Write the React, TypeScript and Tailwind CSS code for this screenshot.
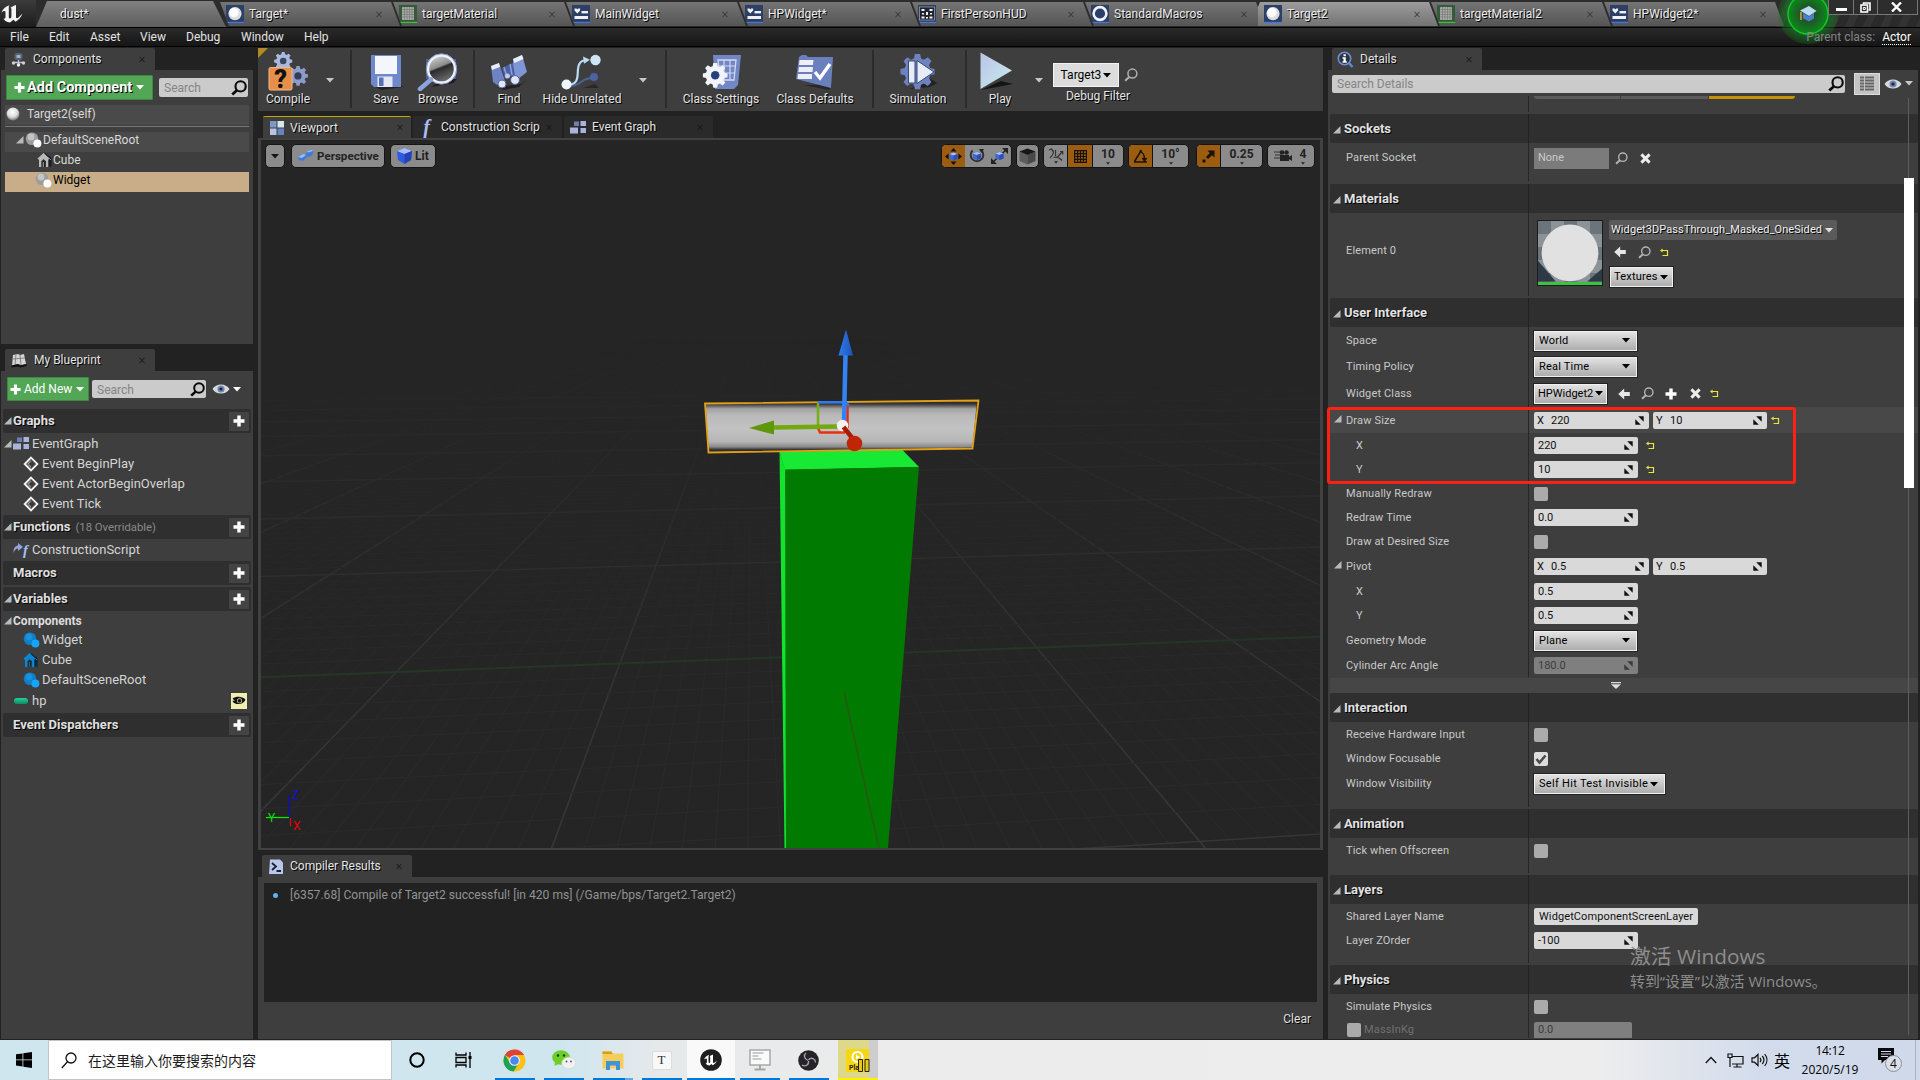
import type { ReactNode } from "react";

const SH = "[text-shadow:1px_1px_0_#000]";

/* ---------- small glyphs ---------- */

const Caret = ({ c = "text-[#c8c8c8]", w = 8 }: { c?: string; w?: number }) => (
  <svg width={w} height={w / 2 + 1} viewBox="0 0 8 5" className={`shrink-0 ${c}`}>
    <path d="M0 0h8L4 4.6z" fill="currentColor" />
  </svg>
);

const Tri = ({ className = "" }: { className?: string }) => (
  <svg width="8" height="8" viewBox="0 0 8 8" className={`shrink-0 ${className}`}>
    <path d="M7.5 0v7.5H0z" fill="#b9b9b9" />
  </svg>
);

const CloseX = ({ className = "" }: { className?: string }) => (
  <svg width="6" height="7" viewBox="0 0 6 7" className={`shrink-0 ${className}`}>
    <path d="M0.5 0.8l5 5.4M5.5 0.8l-5 5.4" stroke="currentColor" strokeWidth="1" />
  </svg>
);

const Lens = ({ size = 15, c = "#0a0a0a", sw = 2 }: { size?: number; c?: string; sw?: number }) => (
  <svg width={size} height={size} viewBox="0 0 15 15" className="shrink-0" fill="none" stroke={c} strokeWidth={sw}>
    <circle cx="9" cy="6" r="4.8" />
    <path d="M5.6 9.6L1.2 13.6" strokeWidth={sw + 0.6} />
  </svg>
);

const Plus = ({ size = 12 }: { size?: number }) => (
  <svg width={size} height={size} viewBox="0 0 12 12" className="shrink-0">
    <path d="M4.3 0.5h3.4v3.8h3.8v3.4H7.7v3.8H4.3V7.7H0.5V4.3h3.8z" fill="#fff" />
  </svg>
);

const Eye = () => (
  <svg width="18" height="12" viewBox="0 0 18 12" className="shrink-0">
    <path d="M0.5 6C4 0 14 0 17.5 6 14 12 4 12 0.5 6z" fill="#d6d9de" />
    <circle cx="9" cy="6" r="3.6" fill="#7186ad" />
    <circle cx="9" cy="6" r="1.6" fill="#1d2637" />
  </svg>
);

const ArrowLeft = () => (
  <svg width="12" height="12" viewBox="0 0 12 12" className="shrink-0">
    <path d="M6.2 0.6v3.3h5.6v4.2H6.2v3.3L0.2 6z" fill="#e6e6e6" />
  </svg>
);

const Cross = () => (
  <svg width="11" height="11" viewBox="0 0 11 11" className="shrink-0">
    <path d="M1.4 1.4l8.2 8.2M9.6 1.4L1.4 9.6" stroke="#ececec" strokeWidth="3" />
  </svg>
);

const Revert = () => (
  <svg width="9" height="9" viewBox="0 0 9 9" className="shrink-0" fill="none">
    <path d="M2 2.5h5.500v5H2.500" stroke="#e9e63a" strokeWidth="1.200" />
    <path d="M0 2.5L2.600 0.500v4z" fill="#e9e63a" />
  </svg>
);

const Spin = ({ c = "#111" }: { c?: string }) => (
  <svg width="9" height="9" viewBox="0 0 9 9" className="shrink-0">
    <path d="M3.2 0.3H8.7V5.8zM0.3 3.2V8.7H5.8z" fill={c} />
  </svg>
);

const Sphere = ({ size = 14 }: { size?: number }) => (
  <svg width={size} height={size} viewBox="0 0 14 14" className="shrink-0">
    <defs>
      <radialGradient id="sph" cx="0.45" cy="0.35" r="0.65">
        <stop offset="0" stopColor="#fff" />
        <stop offset="0.6" stopColor="#dcdcdc" />
        <stop offset="1" stopColor="#777" />
      </radialGradient>
    </defs>
    <circle cx="7" cy="7" r="6.4" fill="url(#sph)" />
  </svg>
);

const SceneBall = ({ blue = false }: { blue?: boolean }) => (
  <svg width="17" height="16" viewBox="0 0 17 16" className="shrink-0">
    <circle cx="7" cy="6.8" r="6.3" fill={blue ? "#0b7fc9" : "#9d9d9d"} />
    <circle cx="6" cy="5" r="3.4" fill={blue ? "#1b92dc" : "#c4c4c4"} />
    <circle cx="12.4" cy="11.4" r="4" fill={blue ? "#15a3fb" : "#fff"} />
  </svg>
);

const House = ({ c, d }: { c: string; d: string }) => (
  <svg width="16" height="16" viewBox="0 0 16 16" className="shrink-0">
    <path d="M8 1l6.500 5V14.500L9 15z" fill={d} />
    <path d="M0.500 6.500L6.500 1l6 5.500-1.200 1.300V15H9V9.300L6.500 7 4.200 9.300V15H2V8z" fill={c} />
    <path d="M5.200 9.500L6.600 8.200 8 9.500V15H5.200z" fill={d} />
    <path d="M6.300 10v5" stroke={c} strokeWidth="0.900" />
    <path d="M12.500 6.500L14 8" stroke={c} strokeWidth="0.800" />
  </svg>
);

const EventDiamond = () => (
  <svg width="16" height="16" viewBox="0 0 16 16" className="shrink-0">
    <path d="M8 1.6L14.4 8 8 14.4 1.6 8z" fill="none" stroke="#f2f2f2" strokeWidth="1.8" />
    <path d="M8 2v12L2 8z" fill="#e9e9e9" opacity="0.25" />
    <path d="M8 5.4l-2.6 2.6L8 10.6" fill="#2b2b2b" stroke="#f2f2f2" strokeWidth="0.6" />
  </svg>
);

const GraphIcon = () => (
  <svg width="16" height="13" viewBox="0 0 16 13" className="shrink-0">
    <g fill="#a9b4dc">
      <rect x="4" y="0.5" width="5" height="4.5" fill="#6f7db0" />
      <rect x="10.5" y="0" width="5.5" height="5" />
      <rect x="0" y="6.5" width="8" height="6" />
      <rect x="10.5" y="7" width="5.5" height="5" />
    </g>
  </svg>
);

const FuncIcon = ({ size = 20 }: { size?: number }) => (
  <span className="font-['Liberation_Serif'] font-bold italic leading-none text-[#a9bdf5]" style={{ fontSize: size }}>
    f
  </span>
);

/* ---------- main tab strip ---------- */

const WidgetGlyph = () => (
  <g>
    <path d="M2.5 3.5h2l.8.9.8-.9h2v2L5.3 8.6 2.5 5.5z" fill="#f0f0f0" />
    <rect x="9.5" y="6" width="6.5" height="2.4" fill="#f0f0f0" />
    <rect x="2.5" y="11" width="13.5" height="3" fill="#f0f0f0" />
  </g>
);

const AssetIcon = ({ kind }: { kind: string }) => {
  const green = kind === "mat";
  return (
    <svg width="18" height="18" viewBox="0 0 18 18" className="shrink-0">
      <rect width="18" height="18" fill={green ? "#345a3a" : "#2c3f66"} />
      <rect y="16.8" width="18" height="1.2" fill={green ? "#37c53c" : "#3b78f0"} />
      {kind === "bp" && (
        <g>
          <circle cx="9" cy="8.6" r="6.6" fill="#dedede" />
          <circle cx="8" cy="7.500" r="4.600" fill="#fff" />
        </g>
      )}
      {green && (
        <g>
          <rect x="3" y="2" width="12" height="13" rx="1" fill="#a9aba9" />
          <path d="M3 4.5h12M3 7h12M3 9.500h12M3 12h12M5.500 2v13M8 2v13M10.500 2v13M13 2v13" stroke="#6e746f" strokeWidth="0.6" />
        </g>
      )}
      {kind === "widget" && <WidgetGlyph />}
      {kind === "hud" && (
        <g fill="#f2f2f2">
          <rect x="1.500" y="2" width="15" height="13" fill="#20242c" stroke="#99a" strokeWidth="0.8" />
          <rect x="3.500" y="4" width="3" height="2" />
          <rect x="11.500" y="4" width="3" height="2" />
          <rect x="8" y="7" width="2" height="3" />
          <rect x="4" y="8" width="2" height="1.500" />
          <rect x="12" y="8" width="2" height="1.500" />
          <rect x="3.500" y="11.500" width="3" height="2" />
          <rect x="8" y="12" width="2" height="1.500" />
          <rect x="11.500" y="11.500" width="3" height="2" />
        </g>
      )}
      {kind === "macro" && <circle cx="9" cy="8.500" r="6.400" fill="none" stroke="#f1f3f8" strokeWidth="2.600" />}
    </svg>
  );
};

const MAIN_TABS = [
  { t: "Target*", k: "bp" },
  { t: "targetMaterial", k: "mat" },
  { t: "MainWidget", k: "widget" },
  { t: "HPWidget*", k: "widget" },
  { t: "FirstPersonHUD", k: "hud" },
  { t: "StandardMacros", k: "macro" },
  { t: "Target2", k: "bp", active: true },
  { t: "targetMaterial2", k: "mat" },
  { t: "HPWidget2*", k: "widget" },
];

const TabStrip = () => (
  <div className="flex h-[27px] shrink-0 bg-[#2c2c2c]">
    <div className="flex w-[36px] shrink-0 items-center bg-gradient-to-b from-[#3c3c3c] to-[#1c1c1c] pl-px">
      <svg width="22" height="19" viewBox="0 0 22 19">
        <path
          d="M0.500 8.500C2 4.500 5 2 8.500 1.200 7.500 2.500 7.800 3.500 7.800 5v8.200c0 1 .7 1.500 1.600 1 .7-.4 1-.9 1-1.700V5.200c0-.8-.4-1.200-1.200-1.200C11 2.600 13 1.800 15 1v1.800V13c0 1.300 1.500 1.600 2.500.6l4-4c-1.500 4-4 6.500-7 8.200l-2-2-3.500 2.700c-3.500-.3-5.500-2-6.500-4 1.200.4 2-.1 2-1.500V8c0-1.300-1.400-1.600-4 .5z"
          fill="#f5f5f5"
        />
      </svg>
    </div>
    <div className="mr-[-6px] flex w-[190px] shrink-0 items-center bg-gradient-to-b from-[#828282] to-[#5e5e5e] pl-[24px] [clip-path:polygon(11px_1px,177px_1px,190px_100%,0_100%)]">
      <span className={`text-[12px] leading-[24px] text-[#efefef] ${SH}`}>dust*</span>
    </div>
    {MAIN_TABS.map((tab) => (
      <div
        key={tab.t}
        className={`mr-[-7px] flex w-[180px] shrink-0 items-center pl-[6px] pt-px ${
          tab.active
            ? "bg-gradient-to-b from-[#a0a0a0] to-[#727272] [clip-path:polygon(2px_2px,171px_2px,180px_26px,-8px_26px)]"
            : "bg-gradient-to-b from-[#777] to-[#545454] [clip-path:polygon(0_2px,171px_2px,180px_26px,9px_26px)]"
        }`}
      >
        <AssetIcon kind={tab.k} />
        <span className={`ml-[5px] grow text-[12px] text-[#ececec] ${SH}`}>{tab.t}</span>
        <CloseX className="mr-[18px] text-[#333]" />
      </div>
    ))}
    <div className="flex grow justify-end bg-[repeating-linear-gradient(115deg,#2a2a2a_0_9px,#333_9px_16px)] pr-[2px]">
      <div className="relative z-20 flex h-[15px]">
        <div className="flex w-[26px] items-center justify-center border border-t-0 border-[#777] bg-[#2d2d2d] pt-[4px]">
          <div className="h-[3px] w-[11px] bg-white" />
        </div>
        <div className="flex w-[23px] items-center justify-center border-b border-[#777] bg-[#2d2d2d]">
          <svg width="11" height="11" viewBox="0 0 11 11" fill="none" stroke="#fff" strokeWidth="1.600">
            <path d="M3.500 2.500V1h6.500v7H8.500" />
            <rect x="1" y="3" width="6.500" height="7" />
            <path d="M3.300 5.500h2v2h-2z" strokeWidth="1" />
          </svg>
        </div>
        <div className="flex w-[41px] items-center justify-center border border-t-0 border-[#777] bg-[#2d2d2d] pr-[3px]">
          <svg width="11" height="10" viewBox="0 0 11 10">
            <path d="M1 0.500l9 9M10 0.500l-9 9" stroke="#fff" strokeWidth="2.400" />
          </svg>
        </div>
      </div>
    </div>
  </div>
);

const MenuBar = () => (
  <div className="flex h-[20px] shrink-0 items-center border-y border-black bg-gradient-to-b from-[#2a2a2a] to-[#161616] pl-[10px] pr-[9px] text-[12px] text-[#e2e2e2]">
    <span className="w-[39px]">File</span>
    <span className="w-[41px]">Edit</span>
    <span className="w-[50px]">Asset</span>
    <span className="w-[46px]">View</span>
    <span className="w-[55px]">Debug</span>
    <span className="w-[63px]">Window</span>
    <span className="grow">Help</span>
    <span className="relative z-20 text-[#868686]">Parent class:</span>
    <span className="ml-[7px] border-b border-dotted border-white leading-[14px] text-white">Actor</span>
  </div>
);

/* ---------- panel tabs ---------- */

const PanelTab = ({
  icon,
  title,
  w,
  active = true,
  line = false,
  gap = "ml-[7px]",
  close = "mr-[10px]",
}: {
  icon: ReactNode;
  title: string;
  w: string;
  active?: boolean;
  line?: boolean;
  gap?: string;
  close?: string;
}) => (
  <div
    className={`flex h-[22px] shrink-0 items-center rounded-t-[2px] pl-[5px] ${w} ${active ? "bg-[#3e3e3e]" : "bg-[#2a2a2a]"} ${
      line ? "border-t border-[#c2a706]" : ""
    }`}
  >
    <span className="flex w-[17px] items-center justify-center">{icon}</span>
    <span className={`grow whitespace-nowrap text-[12px] text-[#e4e4e4] ${gap} ${SH}`}>{title}</span>
    <CloseX className={`${close} text-[#161616]`} />
  </div>
);

const SearchBox = ({ text, cls, size = 15 }: { text: string; cls: string; size?: number }) => (
  <div className={`flex items-center rounded-[2px] bg-[#cbcbcb] pr-px ${cls}`}>
    <span className="grow pt-px text-[12px] text-[#858585]">{text}</span>
    <Lens size={size} />
  </div>
);

/* ---------- left column ---------- */

const ComponentsPanel = () => (
  <div className="flex h-[297px] shrink-0 flex-col">
    <div className="flex h-[23px] shrink-0 pl-[4px] pt-px">
      <PanelTab
        w="w-[150px]"
        gap="ml-[6px]"
        icon={
          <svg width="15" height="15" viewBox="0 0 15 15">
            <rect x="3.500" y="1" width="8" height="7" rx="2" fill="#59626f" />
            <rect x="5.500" y="3" width="4" height="3" fill="#9cb0cf" />
            <path d="M7.500 8v5M3 10.500h9" stroke="#bfc6d3" strokeWidth="1.400" />
            <circle cx="2.500" cy="11" r="1.700" fill="#cfcfcf" />
            <circle cx="12.500" cy="11" r="1.700" fill="#cfcfcf" />
            <circle cx="7.500" cy="13" r="1.700" fill="#efefef" />
          </svg>
        }
        title="Components"
      />
    </div>
    <div className="flex grow flex-col bg-[#3e3e3e] px-[4px]">
      <div className="flex h-[35px] items-center">
        <div className="ml-px flex h-[25px] w-[147px] items-center rounded-[1px] border border-[#3c8a40] bg-[#52a656] pl-[7px]">
          <Plus size={11} />
          <span className={`ml-[2px] text-[14.500px] font-bold text-white ${SH}`}>Add Component</span>
          <span className="ml-[4px]">
            <Caret c="text-white" />
          </span>
        </div>
        <SearchBox text="Search" cls="ml-[6px] h-[19px] w-[89px] pl-[5px]" size={16} />
      </div>
      <div className="flex h-[20px] items-center bg-[#4a4a4a] pb-[3px] pl-[1px]">
        <Sphere size={14} />
        <span className="ml-[7px] text-[12px] text-[#d9d9d9]">Target2(self)</span>
      </div>
      <div className="mt-[1px] h-px bg-[#777]" />
      <div className="mt-[5px] flex h-[20px] items-center bg-[#4a4a4a] pb-[4px] pl-[11px]">
        <Tri />
        <span className="ml-[1px]">
          <SceneBall />
        </span>
        <span className="ml-px text-[12px] text-[#d9d9d9]">DefaultSceneRoot</span>
      </div>
      <div className="flex h-[20px] items-center pb-[4px] pl-[32px]">
        <House c="#b9b9b9" d="#1d1d1d" />
        <span className="text-[12px] text-[#d9d9d9]">Cube</span>
      </div>
      <div className="flex h-[20px] items-center bg-[#c9ad88] pb-[4px] pl-[30px]">
        <SceneBall />
        <span className="ml-px text-[12px] text-black">Widget</span>
      </div>
    </div>
  </div>
);

const GroupHeader = ({ title, note, arrow = true, cls = "" }: { title: string; note?: string; arrow?: boolean; cls?: string }) => (
  <div className={`flex h-[24px] shrink-0 items-center rounded-[2px] bg-[#2f2f2f] pr-[2px] ${cls}`}>
    <span className="w-[10px] pl-[1px]">{arrow && <Tri />}</span>
    <span className={`text-[13px] font-bold text-[#e0e0e0] ${SH}`}>{title}</span>
    {note && <span className="ml-[5px] mt-[2px] text-[11.300px] text-[#8a8a8a]">{note}</span>}
    <span className="ml-auto flex h-[19px] w-[20px] items-center justify-center rounded-[1px] bg-[#434343]">
      <Plus size={12} />
    </span>
  </div>
);

const ListRow = ({ pad, icon, text, h = "h-[20px]", gap = "ml-[4px]" }: { pad: string; icon: ReactNode; text: string; h?: string; gap?: string }) => (
  <div className={`flex shrink-0 items-center ${h} ${pad}`}>
    {icon}
    <span className={`text-[13px] text-[#d4d4d4] ${gap}`}>{text}</span>
  </div>
);

const BlueprintPanel = () => (
  <div className="mt-[4px] flex grow flex-col">
    <div className="flex h-[23px] shrink-0 pl-[4px] pt-px">
      <PanelTab
        w="w-[150px]"
        icon={
          <svg width="16" height="15" viewBox="0 0 16 15">
            <path d="M2 2l5-1 2 1 4-1 2 10-5 1-3-1-6 2z" fill="#d5d5d5" />
            <path d="M5 1.500L4 12M9 2l1 10M2 6l12-1" stroke="#7d7d7d" strokeWidth="0.900" />
            <path d="M0.500 12.500l6-1.500 3 1.500 6-1.500v2l-6 1.500-3-1-6 1z" fill="#111" />
          </svg>
        }
        title="My Blueprint"
      />
    </div>
    <div className="flex grow flex-col bg-[#3e3e3e] pl-[2px] pr-[2px]">
      <div className="flex h-[37px] shrink-0 items-start pl-[4px] pt-[6px]">
        <div className="flex h-[24px] w-[82px] items-center rounded-[1px] border border-[#3c8a40] bg-[#52a656] pl-[2px]">
          <Plus size={11} />
          <span className="ml-[3px] text-[12px] text-white">Add New</span>
          <span className="ml-[4px]">
            <Caret c="text-white" />
          </span>
        </div>
        <SearchBox text="Search" cls="ml-[3px] mt-[3px] h-[18px] w-[114px] pl-[5px]" size={15} />
        <span className="ml-[6px] mt-[6px] flex items-center">
          <Eye />
          <span className="ml-[3px]">
            <Caret c="text-white" />
          </span>
        </span>
      </div>
      <GroupHeader title="Graphs" cls="mt-px" />
      <div className="flex h-[21px] shrink-0 items-center pl-[1px]">
        <Tri />
        <span className="ml-[1px]">
          <GraphIcon />
        </span>
        <span className="ml-[3px] text-[13px] text-[#d4d4d4]">EventGraph</span>
      </div>
      <ListRow pad="pl-[20px]" icon={<EventDiamond />} text="Event BeginPlay" gap="ml-[3px]" />
      <ListRow pad="pl-[20px]" icon={<EventDiamond />} text="Event ActorBeginOverlap" gap="ml-[3px]" />
      <ListRow pad="pl-[20px]" icon={<EventDiamond />} text="Event Tick" gap="ml-[3px]" />
      <GroupHeader title="Functions" note="(18 Overridable)" cls="mt-px" />
      <div className="flex h-[22px] shrink-0 items-center pl-[10px]">
        <svg width="10" height="14" viewBox="0 0 10 14">
          <path d="M0.500 12C0.500 7 2 5 5 4.500V2l5 4-5 4V7.500C3 7.500 1.500 9 0.500 12z" fill="#93a5d8" transform="translate(0,-2)" />
        </svg>
        <FuncIcon size={15} />
        <span className="ml-[4px] text-[13px] text-[#d4d4d4]">ConstructionScript</span>
      </div>
      <GroupHeader title="Macros" arrow={false} />
      <GroupHeader title="Variables" cls="mt-[2px]" />
      <div className="flex h-[19px] shrink-0 items-center pl-[1px]">
        <Tri />
        <span className="ml-[1px] text-[12px] font-bold text-[#dcdcdc]">Components</span>
      </div>
      <ListRow pad="pl-[20px]" icon={<SceneBall blue />} text="Widget" gap="ml-[2px]" />
      <ListRow pad="pl-[20px]" icon={<House c="#0c87cf" d="#06283d" />} text="Cube" gap="ml-[3px]" />
      <ListRow pad="pl-[20px]" icon={<SceneBall blue />} text="DefaultSceneRoot" gap="ml-[2px]" />
      <div className="flex h-[22px] shrink-0 items-center pl-[11px] pr-[4px]">
        <span className="h-[6px] w-[14px] rounded-[3px] bg-gradient-to-b from-[#1fd39b] to-[#0c8c63]" />
        <span className="ml-[4px] grow text-[13px] text-[#d4d4d4]">hp</span>
        <span className="flex h-[16px] w-[16px] items-center justify-center bg-[#f1efb0]">
          <svg width="14" height="10" viewBox="0 0 14 10">
            <path d="M0.500 2.500C4 0 10 0 13.500 3.500 12 8.500 4 9.500 1 6L0.500 4.500 3 5z" fill="#111" />
            <circle cx="7.500" cy="4.800" r="2.500" fill="#f1efb0" />
            <circle cx="7.500" cy="4.800" r="1.900" fill="#111" />
          </svg>
        </span>
      </div>
      <GroupHeader title="Event Dispatchers" arrow={false} cls="mt-[1px]" />
    </div>
  </div>
);

/* ---------- toolbar ---------- */

const GEAR =
  "M8.300 0h3.400l.6 2.800 1.900.8L16.600 2 19 4.400l-1.600 2.400.8 1.900 2.800.6v3.400l-2.800.6-.8 1.900 1.600 2.400-2.400 2.400-2.400-1.600-1.900.8-.6 2.800H8.300l-.6-2.800-1.900-.8L3.400 20 1 17.600l1.600-2.400-.8-1.900L-1 12.700V9.300l2.800-.6.8-1.900L1 4.400 3.400 2l2.400 1.600 1.900-.8z";

const CompileIcon = () => (
  <svg width="40" height="40" viewBox="0 0 40 40" className="overflow-visible">
    <g transform="translate(7,0) scale(0.820)">
      <path d={GEAR} fill="#aab9df" />
      <circle cx="10" cy="11" r="4" fill="#3b4665" />
    </g>
    <g transform="translate(21,14) scale(0.900)">
      <path d={GEAR} fill="#8c9bc9" />
      <circle cx="10" cy="11" r="4" fill="#333c58" />
    </g>
    <rect x="1" y="15.500" width="23" height="22.500" rx="1.500" fill="#e58f4b" stroke="#f4b784" />
    <text x="12.500" y="35.500" fontFamily="Roboto" fontWeight="900" fontSize="25" textAnchor="middle" fill="#111">
      ?
    </text>
  </svg>
);

const SaveIcon = () => (
  <svg width="36" height="38" viewBox="0 0 36 38">
    <path d="M8 34l24-3 3 3-22 3z" fill="#111" opacity="0.600" />
    <path d="M3 2h30v32H6l-3-3z" fill="#6f88cc" />
    <rect x="7" y="3" width="22" height="18" fill="#f4f6fb" />
    <rect x="9.500" y="23.500" width="15" height="10.500" fill="#e4e8f2" />
    <rect x="11" y="24.500" width="4.500" height="8.500" fill="#5570b8" />
  </svg>
);

const BrowseIcon = () => (
  <svg width="42" height="38" viewBox="0 0 42 38">
    <defs>
      <linearGradient id="lens" x1="0" y1="0" x2="0.400" y2="1">
        <stop offset="0" stopColor="#e4e4e4" />
        <stop offset="0.500" stopColor="#8b8b8b" />
        <stop offset="0.560" stopColor="#2a2a2a" />
        <stop offset="1" stopColor="#6a6a6a" />
      </linearGradient>
    </defs>
    <path d="M9 6h30v20H9z" fill="#5a6fae" opacity="0.700" />
    <path d="M14 34l22-4 4-4-10-1z" fill="#0e0e0e" opacity="0.700" />
    <circle cx="24.500" cy="16" r="13.800" fill="url(#lens)" stroke="#eef2fb" strokeWidth="3" />
    <circle cx="24.500" cy="16" r="15.200" fill="none" stroke="#7c90cf" strokeWidth="1" />
    <path d="M14 26.500L3 36" stroke="#8ea3de" strokeWidth="4.500" strokeLinecap="round" />
  </svg>
);

const FindIcon = () => (
  <svg width="40" height="38" viewBox="0 0 40 38">
    <path d="M8 34l24-3 6-5-8 8-16 3z" fill="#0e0e0e" opacity="0.600" />
    <path d="M2 13l8-3 6 18-8 4-4-3z" fill="#6d83c4" />
    <path d="M24 6l9-4 5 17-9 7-5-3z" fill="#7f96d6" />
    <path d="M2 13l8-3 1 4-8 3zM24 6l9-4 1.500 4-9 4z" fill="#e9edf8" />
    <path d="M13 15l11-5 2 12-10 4z" fill="#4d62a4" />
    <path d="M15 14l3 10M21 11l2 11" stroke="#8ea3dd" strokeWidth="1.400" />
    <circle cx="13" cy="31" r="4" fill="#dfe6f7" stroke="#55689f" />
    <circle cx="26" cy="27" r="4.400" fill="#dfe6f7" stroke="#55689f" />
    <circle cx="18.500" cy="23" r="2.500" fill="#c2cdee" />
  </svg>
);

const HideIcon = () => (
  <svg width="42" height="38" viewBox="0 0 42 38" fill="none">
    <path d="M8 33c14 0 10-8 24-8" stroke="#4d6396" strokeWidth="2" />
    <circle cx="33" cy="24" r="4" fill="#4a63a4" />
    <path d="M22 35h16l-4-4z" fill="#111" opacity="0.500" />
    <path d="M6 32C26 32 8 8 26 7" stroke="#b9dcf3" strokeWidth="2.200" />
    <path d="M22 3.500l7 3.300-6 4z" fill="#b9dcf3" />
    <circle cx="5.500" cy="31.500" r="5" fill="#eef7fd" />
    <circle cx="34.500" cy="7" r="5.200" fill="#cfe6f5" />
  </svg>
);

const ClassSettingsIcon = () => (
  <svg width="40" height="38" viewBox="0 0 40 38">
    <path d="M12 2h28l-3 30-4 4H14z" fill="#7387c4" />
    <path d="M17 7h18l-2 20H19z" fill="none" stroke="#cfd9f3" strokeWidth="1.300" />
    <path d="M17.500 13h17M18 20h16M23 7v20M29 7v20" stroke="#cfd9f3" strokeWidth="1.200" />
    <g transform="translate(3,10) scale(1.120)">
      <path d={GEAR} fill="#f2f4fa" />
      <circle cx="10" cy="11" r="3.800" fill="#26407a" />
    </g>
  </svg>
);

const ClassDefaultsIcon = () => (
  <svg width="40" height="38" viewBox="0 0 40 38">
    <path d="M8 32l26 5 3-5z" fill="#111" opacity="0.500" />
    <path d="M4 4l3-2h4l2 2h25l-2 31L1 26z" fill="#6a7fbe" />
    <path d="M4.500 7h14l-.5 5H4zM4 14h14l-.5 5H3.300zM3 21h14v5H2.500z" fill="#eceff8" />
    <path d="M20 19l5 6 10-14" fill="none" stroke="#fff" strokeWidth="3.400" />
  </svg>
);

const SimulationIcon = () => (
  <svg width="40" height="38" viewBox="0 0 40 38">
    <path d="M12 36l20-2 7-4-6-4z" fill="#0f0f0f" opacity="0.600" />
    <g transform="translate(4,1) scale(1.550,1.600)">
      <path d={GEAR} fill="#6e82bf" />
    </g>
    <rect x="10.500" y="8" width="6.500" height="22" fill="#e7ecf9" stroke="#39486f" />
    <path d="M19 7.500L36 19 19 30.500z" fill="#e7ecf9" stroke="#39486f" />
  </svg>
);

const PlayIcon = () => (
  <svg width="34" height="40" viewBox="0 0 34 40" className="mr-[7px]">
    <defs>
      <linearGradient id="play" x1="0" y1="0" x2="1" y2="1">
        <stop offset="0" stopColor="#b9c4e6" />
        <stop offset="1" stopColor="#c9ecee" />
      </linearGradient>
    </defs>
    <path d="M1 38l20-9 12 3z" fill="#0b0b0b" opacity="0.800" />
    <path d="M0.500 0.500L32 18.500 0.500 37z" fill="url(#play)" />
  </svg>
);

const Tool = ({ icon, label, w }: { icon: ReactNode; label: string; w: string }) => (
  <div className={`flex shrink-0 flex-col items-center pt-[5px] ${w}`}>
    <div className="flex h-[38px] items-center">{icon}</div>
    <span className={`whitespace-nowrap text-[12px] leading-[16px] text-[#e4e4e4] ${SH}`}>{label}</span>
  </div>
);

const Sep = () => <div className="mt-[2px] h-[58px] w-[2px] shrink-0 bg-[#2b2b2b]" />;
const DropCell = ({ w }: { w: string }) => (
  <div className={`flex shrink-0 justify-center pt-[30px] ${w}`}>
    <Caret />
  </div>
);

const Toolbar = () => (
  <div className="relative flex h-[63px] shrink-0 bg-[#3e3e3e] pl-[1px]">
    <svg width="10" height="10" className="absolute left-0 top-0">
      <path d="M0 0h10L0 10z" fill="#b38b23" />
    </svg>
    <Tool w="w-[58px]" icon={<CompileIcon />} label="Compile" />
    <DropCell w="w-[25px]" />
    <div className="w-[8px]" />
    <Sep />
    <Tool w="w-[68px]" icon={<SaveIcon />} label="Save" />
    <Tool w="w-[36px]" icon={<BrowseIcon />} label="Browse" />
    <div className="w-[17px]" />
    <Sep />
    <Tool w="w-[68px]" icon={<FindIcon />} label="Find" />
    <Tool w="w-[78px]" icon={<HideIcon />} label="Hide Unrelated" />
    <DropCell w="w-[44px]" />
    <Sep />
    <div className="w-[14px]" />
    <Tool w="w-[80px]" icon={<ClassSettingsIcon />} label="Class Settings" />
    <div className="w-[14px]" />
    <Tool w="w-[80px]" icon={<ClassDefaultsIcon />} label="Class Defaults" />
    <div className="w-[17px]" />
    <Sep />
    <Tool w="w-[88px]" icon={<SimulationIcon />} label="Simulation" />
    <div className="w-[3px]" />
    <Sep />
    <Tool w="w-[66px]" icon={<PlayIcon />} label="Play" />
    <DropCell w="w-[12px]" />
    <div className="ml-[8px] flex w-[90px] shrink-0 flex-col pt-[15px]">
      <div className="flex items-center">
        <div className="flex h-[24px] w-[66px] items-center justify-center gap-[2px] border border-[#f2f2f2] bg-[#dcdcdc] text-[12px] text-black">
          Target3
          <Caret c="text-black" />
        </div>
        <span className="ml-[5px]">
          <Lens size={14} c="#b0b0b0" sw={1.6} />
        </span>
      </div>
      <span className={`pt-[2px] text-center text-[12px] leading-[15px] text-[#e4e4e4] ${SH}`}>Debug Filter</span>
    </div>
  </div>
);

/* ---------- viewport ---------- */

const VPX = 490;
const VPY = 168;
const FAR_X = 9640;

const fan = Array.from({ length: 121 }, (_, i) => i - 60).map((n) => ({
  x: 618 + n * 32.8,
  major: n % 10 === 0,
}));
const rows = Array.from({ length: 110 }, (_, i) => i - 24).map((n) => ({
  y: VPY + 349 / (1 + n * 0.0375),
  major: n % 10 === 0,
  axis: n === 0,
}));

const Scene = () => (
  <svg width="1059" height="708" viewBox="0 0 1059 708" className="block">
    <defs>
      <linearGradient id="fade" x1="0" y1="0" x2="0" y2="1">
        <stop offset="0.280" stopColor="#fff" stopOpacity="0" />
        <stop offset="0.500" stopColor="#fff" stopOpacity="0.350" />
        <stop offset="0.750" stopColor="#fff" stopOpacity="0.750" />
        <stop offset="1" stopColor="#fff" stopOpacity="1" />
      </linearGradient>
      <mask id="fadeMask">
        <rect width="1059" height="708" fill="url(#fade)" />
      </mask>
      <linearGradient id="bar" x1="0" y1="0" x2="0" y2="1">
        <stop offset="0" stopColor="#1d1d1d" />
        <stop offset="0.070" stopColor="#3a3a3a" />
        <stop offset="0.160" stopColor="#a2a2a2" />
        <stop offset="0.280" stopColor="#b9b9b9" />
        <stop offset="0.550" stopColor="#c3c3c3" />
        <stop offset="0.800" stopColor="#b5b5b5" />
        <stop offset="0.900" stopColor="#8a8a8a" />
        <stop offset="0.950" stopColor="#3a3a3a" />
        <stop offset="1" stopColor="#1d1d1d" />
      </linearGradient>
      <linearGradient id="cone" x1="0" y1="0" x2="1" y2="0">
        <stop offset="0" stopColor="#2f7cf0" />
        <stop offset="1" stopColor="#1d55b5" />
      </linearGradient>
    </defs>
    <rect width="1059" height="708" fill="#252525" />
    <g mask="url(#fadeMask)">
      {fan.map((l) => (
        <path key={l.x} d={`M${VPX} ${VPY}L${l.x} 710`} stroke={l.major ? "#383838" : "#2c2c2c"} strokeWidth={l.major ? 1.6 : 1} />
      ))}
      {rows.map((r) => (
        <path
          key={r.y}
          d={`M0 ${r.y + ((r.y - VPY) / (FAR_X - 530)) * 530}L1059 ${r.y - ((r.y - VPY) / (FAR_X - 530)) * 529}`}
          stroke={r.axis ? "#243d26" : r.major ? "#363636" : "#2b2b2b"}
          strokeWidth={r.axis ? 2 : r.major ? 1.5 : 1}
        />
      ))}
    </g>

    {/* green pillar */}
    <path d="M518.500 312L641 309.500 658 327 524 330z" fill="#17e935" />
    <path d="M518.500 312L524.500 330 525 708H523.500z" fill="#12e42e" />
    <path d="M524.500 329.500L658 327 627 708H525z" fill="#017a01" />
    <path d="M583 552L618 708" stroke="#245a12" strokeWidth="1.600" />

    {/* widget bar */}
    <path d="M444.500 263.500L716 260.500 711.500 307.500 447.500 312z" fill="url(#bar)" />
    <path d="M444 263.500L717.500 260.500 711.500 308.500 447.500 312.500z" fill="none" stroke="#e2a019" strokeWidth="1.800" />

    {/* transform gizmo */}
    <path d="M557 262v26" stroke="#77b010" strokeWidth="2.500" />
    <path d="M557 262.200h28l3 4" stroke="#2f7cf0" strokeWidth="2.500" fill="none" />
    <path d="M586.500 266v22" stroke="#ea2a10" strokeWidth="2.500" />
    <path d="M557 288l2 4.500h25" stroke="#ea3010" strokeWidth="2.500" fill="none" />
    <path d="M583 281L584.500 215" stroke="#3383f5" strokeWidth="4.500" />
    <path d="M585 189.500L592 215.500H577.500z" fill="url(#cone)" />
    <path d="M512 287.500L577 286.500" stroke="#72a90c" strokeWidth="4.500" />
    <path d="M488 288L513 280.500V294.500z" fill="#5f970a" />
    <circle cx="581.500" cy="285.500" r="5.800" fill="#f2f2f2" />
    <path d="M582.500 287L592 299" stroke="#a81c04" strokeWidth="4.500" />
    <circle cx="593.500" cy="303.500" r="7.800" fill="#bf2506" />

    {/* axis legend */}
    <path d="M28.500 655V677" stroke="#0c0cd0" strokeWidth="1.200" />
    <path d="M5 677.500H28" stroke="#00ef00" strokeWidth="1.200" />
    <path d="M29.500 678V686" stroke="#f00000" strokeWidth="1.200" />
    <g fontFamily="Roboto" fontSize="12">
      <text x="31" y="659" fill="#1111d8">
        Z
      </text>
      <text x="7" y="681.500" fill="#00e000">
        Y
      </text>
      <text x="32" y="690" fill="#e60000">
        X
      </text>
    </g>
  </svg>
);

const Pill = ({ w, children }: { w: string; children: ReactNode }) => (
  <div className={`flex h-[24px] items-stretch overflow-hidden rounded-[5px] border border-[#141414] bg-[#8b8b8b] ${w}`}>{children}</div>
);

const Cell = ({ w, on = false, bar = false, children }: { w: string; on?: boolean; bar?: boolean; children: ReactNode }) => (
  <div className={`flex flex-col items-center justify-center ${w} ${on ? "bg-[#9c5d10]" : ""} ${bar ? "border-l border-[#141414]" : ""}`}>
    {children}
  </div>
);

const NumCell = ({ w, v }: { w: string; v: string }) => (
  <Cell w={w} bar>
    <span className="text-[12px] font-bold leading-[13px] text-[#222]">{v}</span>
    <span className="mt-[1px]">
      <Caret c="text-[#222]" w={4} />
    </span>
  </Cell>
);

const BlueCube = ({ x = 5, y = 5, s = 8 }: { x?: number; y?: number; s?: number }) => (
  <g transform={`translate(${x},${y}) scale(${s / 8})`}>
    <path d="M0 1.500L4 0l4 1.500v5L4 8 0 6.500z" fill="#3f68cf" />
    <path d="M0 1.500L4 3l4-1.500L4 0z" fill="#a9c0f5" />
    <path d="M4 3v5l4-1.500v-5z" fill="#2e4fae" />
  </g>
);

const ViewportBar = () => (
  <div className="absolute left-[4px] right-[5px] top-[4px] flex items-start">
    <Pill w="w-[20px]">
      <Cell w="w-full">
        <Caret c="text-[#151515]" />
      </Cell>
    </Pill>
    <div className="w-[6px]" />
    <Pill w="w-[94px]">
      <div className="flex items-center pl-[5px]">
        <svg width="17" height="14" viewBox="0 0 17 14">
          <path d="M1 8l5-3 3 1 1-4 5-1 1.500 2L15 7l-5 1-4 4-4-1z" fill="#4379d8" />
          <path d="M1 8l5-3 3 1-4 3zM10 2l5-1 1 1-5 1.500z" fill="#9bbcf2" />
        </svg>
        <span className="ml-[3px] text-[11.600px] font-bold text-[#222]">Perspective</span>
      </div>
    </Pill>
    <div className="w-[5px]" />
    <Pill w="w-[46px]">
      <div className="flex items-center pl-[6px]">
        <svg width="15" height="16" viewBox="0 0 15 16">
          <path d="M0 3l7.500-3L15 3l-1 9-6.500 4L1 12z" fill="#2f5be0" />
          <path d="M0 3l7.500-3L15 3 7.500 6z" fill="#a9c0f8" />
          <path d="M7.500 6v10L14 12l1-9z" fill="#2444b5" />
        </svg>
        <span className="ml-[3px] text-[12px] font-bold text-[#222]">Lit</span>
      </div>
    </Pill>
    <div className="grow" />
    <Pill w="w-[71px]">
      <Cell w="w-[23px]" on>
        <svg width="17" height="17" viewBox="0 0 17 17">
          <path d="M8.500 0l3 3.600h-6zM8.500 17l3-3.600h-6zM0 8.500l3.600-3v6zM17 8.500l-3.600-3v6z" fill="#111" />
          <BlueCube x={4.5} y={4.5} />
        </svg>
      </Cell>
      <Cell w="w-[23px]">
        <svg width="16" height="16" viewBox="0 0 16 16">
          <path d="M3.500 2.500a6.300 6.300 0 1 0 9 0" fill="none" stroke="#333" strokeWidth="2" />
          <path d="M10 1h5l-2.500 4z" fill="#222" />
          <BlueCube x={4} y={4} />
        </svg>
      </Cell>
      <Cell w="w-[23px]">
        <svg width="17" height="16" viewBox="0 0 17 16">
          <path d="M11 0h6v6zM0 10v6h6z" fill="#222" />
          <path d="M2 14L15 2" stroke="#222" strokeWidth="1.500" />
          <BlueCube x={4.5} y={4} />
        </svg>
      </Cell>
    </Pill>
    <div className="w-[4px]" />
    <Pill w="w-[23px]">
      <Cell w="w-full">
        <svg width="17" height="17" viewBox="0 0 17 17">
          <path d="M0.500 3.500L8.500 7v9.500L0.500 13z" fill="#5c5c5c" />
          <path d="M16.500 3.500L8.500 7v9.500l8-3.500z" fill="#484848" />
          <path d="M0.500 3.500L8.500 0.500l8 3L8.500 7z" fill="#161616" />
        </svg>
      </Cell>
    </Pill>
    <div className="w-[4px]" />
    <Pill w="w-[81px]">
      <Cell w="w-[23px]">
        <svg width="16" height="13" viewBox="0 0 16 13" fill="none" stroke="#333" strokeWidth="1.200">
          <path d="M1 2l2.500-1L5 3.500M3.500 1c3 2 2.500 5-1.500 9M14.500 3.500L9.500 9M12 3.500h2.700V6.500M5.500 9.500c3-1 6 0 8.500 3M7.500 2v6" />
        </svg>
        <Caret c="text-[#222]" w={4} />
      </Cell>
      <Cell w="w-[25px]" on bar>
        <svg width="13" height="13" viewBox="0 0 13 13" fill="none" stroke="#1a1204" strokeWidth="1.200">
          <path d="M0.600 0.600h11.800v11.800H0.600zM3.600 0v13M6.500 0v13M9.400 0v13M0 3.600h13M0 6.500h13M0 9.400h13" />
        </svg>
      </Cell>
      <NumCell w="w-[31px]" v="10" />
    </Pill>
    <div className="w-[4px]" />
    <Pill w="w-[61px]">
      <Cell w="w-[23px]" on>
        <svg width="15" height="14" viewBox="0 0 15 14" fill="none" stroke="#1a1204" strokeWidth="1.500">
          <path d="M1 13h13M1.500 12.500L8.500 1M6.500 2c3.500 1 5.500 5 5 10M9.500 9l2 3 2-3" />
        </svg>
      </Cell>
      <NumCell w="w-[36px]" v="10°" />
    </Pill>
    <div className="w-[7px]" />
    <Pill w="w-[67px]">
      <Cell w="w-[23px]" on>
        <svg width="13" height="13" viewBox="0 0 13 13">
          <path d="M5.500 0.500h7v7L10 5.200 6 9 4 7l3.800-4z" fill="#1a1204" />
          <path d="M0.500 9.500h3v3h-3z" fill="#1a1204" />
        </svg>
      </Cell>
      <NumCell w="w-[42px]" v="0.25" />
    </Pill>
    <div className="w-[4px]" />
    <Pill w="w-[48px]">
      <Cell w="w-[29px]">
        <svg width="18" height="12" viewBox="0 0 18 12">
          <path d="M0 2h7M1 5h6M0 8h7" stroke="#333" strokeWidth="1" />
          <circle cx="8" cy="2.500" r="2.300" fill="#222" />
          <circle cx="12.500" cy="2.500" r="2.300" fill="#222" />
          <path d="M6 5h9v6H6zM15 7l3-2v6l-3-2z" fill="#222" />
        </svg>
      </Cell>
      <div className="flex w-[12px] flex-col items-center justify-center">
        <span className="text-[12px] font-bold leading-[13px] text-[#222]">4</span>
        <span className="mt-[1px]">
          <Caret c="text-[#222]" w={4} />
        </span>
      </div>
    </Pill>
  </div>
);

const CenterColumn = () => (
  <div className="flex w-[1065px] shrink-0 flex-col pt-px">
    <Toolbar />
    <div className="flex h-[27px] shrink-0 items-start gap-[2px] pl-[5px] pt-[5px]">
      <PanelTab
        w="w-[148px]"
        line
        icon={
          <svg width="14" height="14" viewBox="0 0 14 14">
            <rect width="6.500" height="6.500" fill="#7e97c9" />
            <rect x="7.500" width="6.500" height="6.500" fill="#d6e6ee" />
            <rect y="7.500" width="6.500" height="6.500" fill="#b7c5e6" />
            <rect x="7.500" y="7.500" width="6.500" height="6.500" fill="#6782bd" />
          </svg>
        }
        title="Viewport"
        gap="ml-[5px]"
        close="mr-[8px]"
      />
      <PanelTab w="w-[149px]" active={false} icon={<FuncIcon size={20} />} title="Construction Scrip" gap="ml-[6px]" close="mr-[10px]" />
      <PanelTab w="w-[149px]" active={false} icon={<GraphIcon />} title="Event Graph" gap="ml-[6px]" />
    </div>
    <div className="relative h-[712px] shrink-0 border-2 border-l-[3px] border-r-[3px] border-[#414141]">
      <Scene />
      <ViewportBar />
    </div>
    <div className="flex h-[27px] shrink-0 items-end pl-[4px]">
      <PanelTab
        w="w-[150px]"
        gap="ml-[6px]"
        icon={
          <svg width="14" height="15" viewBox="0 0 14 15">
            <path d="M1 0.500h10l3 3V15H0z" fill="#b9c8ea" />
            <path d="M3 4l4 3.500L3 11M7.500 12h4.500" fill="none" stroke="#16203a" strokeWidth="1.800" />
          </svg>
        }
        title="Compiler Results"
        close="mr-[10px]"
      />
    </div>
    <div className="flex grow flex-col bg-[#3e3e3e] pt-[6px]">
      <div className="mx-[6px] h-[119px] bg-[#222]">
        <div className="flex h-[24px] items-center pl-[9px]">
          <span className="h-[5px] w-[5px] rounded-full bg-[#5fb4ee]" />
          <span className="ml-[12px] text-[12.100px] text-[#929292]">
            [6357.68] Compile of Target2 successful! [in 420 ms] (/Game/bps/Target2.Target2)
          </span>
        </div>
      </div>
      <div className={`pr-[12px] pt-[10px] text-right text-[12px] text-[#e0e0e0] ${SH}`}>Clear</div>
    </div>
  </div>
);

/* ---------- details ---------- */

const Section = ({ title, cls = "" }: { title: string; cls?: string }) => (
  <div className={`flex h-[29px] shrink-0 items-center rounded-[2px] bg-[#2f2f2f] ${cls}`}>
    <span className="flex w-[199px] items-center self-stretch border-r border-[#222] pl-[3px]">
      <Tri className="mt-[2px]" />
      <span className={`ml-[3px] text-[13px] font-bold text-[#e2e2e2] ${SH}`}>{title}</span>
    </span>
  </div>
);

const Row = ({
  label,
  h,
  indent = false,
  arrow = false,
  hot = false,
  pb = "pb-0",
  children,
}: {
  label: string;
  h: string;
  indent?: boolean;
  arrow?: boolean;
  hot?: boolean;
  pb?: string;
  children?: ReactNode;
}) => (
  <div className={`flex shrink-0 items-stretch ${h} ${hot ? "bg-[#484848]" : ""}`}>
    <span className={`flex w-[199px] items-center border-r border-[#262626] pt-px ${pb} ${indent ? "pl-[26px]" : arrow ? "pl-[4px]" : "pl-[16px]"}`}>
      {arrow && <Tri className="mr-[4px] mt-[-3px]" />}
      <span className="whitespace-nowrap text-[11px] tracking-[0.150px] text-[#c9c9c9]">{label}</span>
    </span>
    <span className={`flex items-center pl-[5px] pt-px ${pb}`}>{children}</span>
  </div>
);

const Combo = ({ text, w, spread = false }: { text: string; w: string; spread?: boolean }) => (
  <div
    className={`flex h-[20px] items-center border border-[#f0f0f0] bg-gradient-to-b from-[#e2e2e2] to-[#adadad] pl-[4px] text-[11px] tracking-[0.200px] text-black shadow-[0_0_0_1px_#222] ${w}`}
  >
    <span className={spread ? "grow whitespace-nowrap" : "whitespace-nowrap"}>{text}</span>
    <span className={spread ? "mr-[6px]" : "ml-[2px]"}>
      <Caret c="text-black" />
    </span>
  </div>
);

const Num = ({ v, axis, w = "w-[104px]", off = false, spin = true }: { v: string; axis?: string; w?: string; off?: boolean; spin?: boolean }) => (
  <div
    className={`flex h-[17px] items-center rounded-[2px] pr-[5px] text-[11px] ${w} ${off ? "bg-[#7f7f7f] text-[#3c3c3c]" : "bg-[#d9d9d9] text-[#111]"} ${
      axis ? "pl-[3px]" : "pl-[4px]"
    }`}
  >
    {axis && <span className="w-[14px]">{axis}</span>}
    <span className="grow">{v}</span>
    {spin && <Spin c={off ? "#3a3a3a" : "#111"} />}
  </div>
);

const Check = ({ on = false }: { on?: boolean }) => (
  <span className={`flex h-[14px] w-[14px] items-center justify-center rounded-[2px] ${on ? "bg-[#dcdcdc]" : "bg-[#ababab]"}`}>
    {on && (
      <svg width="12" height="12" viewBox="0 0 12 12">
        <path d="M1.500 6l3 3.500L10.500 2.500" fill="none" stroke="#4a4a4a" strokeWidth="2.600" />
      </svg>
    )}
  </span>
);

const Details = () => (
  <div className="relative ml-[5px] flex w-[590px] shrink-0 flex-col">
    <div className="flex h-[23px] shrink-0 pl-[4px] pt-px">
      <PanelTab
        w="w-[150px]"
        icon={
          <svg width="17" height="17" viewBox="0 0 17 17">
            <path d="M11 11l4.500 5" stroke="#5d86d8" strokeWidth="2.600" />
            <circle cx="7.500" cy="7.500" r="6.200" fill="#2c3340" stroke="#6f8fd2" strokeWidth="1.600" />
            <path d="M6.500 3.200h2.300v2H6.500zM5.500 6.200h3.300v4h1v1.500H5.500v-1.500h1V7.700h-1z" fill="#fff" />
          </svg>
        }
        title="Details"
        gap="ml-[6px]"
      />
    </div>
    <div className="flex grow flex-col overflow-hidden bg-[#3e3e3e] pl-[2px]">
      <div className="flex h-[26px] shrink-0 items-center pl-[2px] pt-px">
        <SearchBox text="Search Details" cls="h-[18px] w-[513px] pl-[5px]" size={16} />
        <div className="ml-[9px] flex h-[22px] w-[26px] items-center justify-center border border-[#ddd] bg-[#c4c4c4]">
          <svg width="14" height="15" viewBox="0 0 14 15" stroke="#666" fill="none">
            <path d="M0 1.500h14M0 4.500h14M0 7.500h14M0 10.500h14M0 13.500h14" strokeWidth="2" />
            <path d="M4.500 0v15" stroke="#c4c4c4" strokeWidth="1" />
          </svg>
        </div>
        <span className="ml-[4px]">
          <Eye />
        </span>
        <span className="ml-[3px]">
          <Caret />
        </span>
      </div>
      <div className="flex h-[942px] shrink-0 flex-col overflow-hidden">
        <div className="flex h-[18px] shrink-0 items-start">
          <span className="h-[16px] w-[199px] border-r border-[#262626]" />
          <span className="ml-[5px] h-[3px] w-[86px] rounded-bl-[3px] bg-[#5c5c5c]" />
          <span className="ml-px h-[3px] w-[87px] bg-[#5c5c5c]" />
          <span className="ml-px h-[3px] w-[86px] rounded-br-[3px] bg-[#c79005]" />
        </div>
        <Section title="Sockets" />
        <Row label="Parent Socket" h="h-[38px]" pb="pb-[9px]">
          <div className="flex h-[21px] w-[75px] items-center bg-[#7b7b7b] pl-[4px] text-[11px] text-[#c9c9c9]">None</div>
          <span className="ml-[6px] flex">
            <Lens size={13} c="#b4b4b4" sw={1.6} />
          </span>
          <span className="ml-[12px]">
            <Cross />
          </span>
        </Row>
        <Section title="Materials" cls="mt-[3px]" />
        <div className="flex h-[83px] shrink-0">
          <span className="flex w-[199px] items-center border-r border-[#262626] pb-[8px] pl-[16px] text-[11px] tracking-[0.150px] text-[#c9c9c9]">
            Element 0
          </span>
          <div className="ml-[8px] mt-[7px] flex h-[66px] w-[66px] flex-col border border-[#1c1c1c] bg-[conic-gradient(#8b9399_25%,#6c747b_0_50%,#8b9399_0_75%,#6c747b_0)] bg-[length:26px_26px]">
            <svg width="64" height="61" viewBox="0 0 65 61">
              <path d="M0 40L18 61H0zM50 61L65 48V61z" fill="#2d3944" />
              <circle cx="32.500" cy="32" r="28.800" fill="#e1e1e1" />
            </svg>
            <div className="h-[3px] bg-[#3cc141]" />
          </div>
          <div className="ml-[6px] flex flex-col items-start pt-[7px]">
            <div className="flex h-[20px] w-[228px] items-center rounded-[2px] bg-[#5a5a5a] pl-[2px]">
              <span className={`text-[11px] tracking-[0.080px] text-[#f0f0f0] ${SH}`}>Widget3DPassThrough_Masked_OneSided</span>
              <span className="ml-[3px]">
                <Caret c="text-[#e0e0e0]" />
              </span>
            </div>
            <div className="flex h-[27px] items-center pb-[3px] pl-[5px]">
              <ArrowLeft />
              <span className="ml-[12px]">
                <Lens size={13} c="#b4b4b4" sw={1.6} />
              </span>
              <span className="ml-[9px]">
                <Revert />
              </span>
            </div>
            <div className="ml-px">
              <Combo text="Textures" w="w-[63px] !pl-[3px]" />
            </div>
          </div>
        </div>
        <Section title="User Interface" cls="mt-[2px]" />
        <Row label="Space" h="h-[26px]">
          <Combo text="World" w="w-[103px]" spread />
        </Row>
        <Row label="Timing Policy" h="h-[26px]">
          <Combo text="Real Time" w="w-[103px]" spread />
        </Row>
        <Row label="Widget Class" h="h-[28px]">
          <Combo text="HPWidget2" w="w-[73px] !pl-[3px] !tracking-[0]" />
          <span className="ml-[11px] flex items-center">
            <ArrowLeft />
            <span className="ml-[11px]">
              <Lens size={13} c="#b4b4b4" sw={1.6} />
            </span>
            <span className="ml-[11px]">
              <Plus size={12} />
            </span>
            <span className="ml-[13px]">
              <Cross />
            </span>
            <span className="ml-[9px]">
              <Revert />
            </span>
          </span>
        </Row>
        <Row label="Draw Size" h="h-[26px]" arrow hot>
          <Num axis="X" v="220" w="w-[115px]" />
          <span className="w-[4px]" />
          <Num axis="Y" v="10" w="w-[114px]" />
          <span className="ml-[4px]">
            <Revert />
          </span>
        </Row>
        <Row label="X" h="h-[24px]" indent>
          <Num v="220" />
          <span className="ml-[8px]">
            <Revert />
          </span>
        </Row>
        <Row label="Y" h="h-[24px]" indent>
          <Num v="10" />
          <span className="ml-[8px]">
            <Revert />
          </span>
        </Row>
        <Row label="Manually Redraw" h="h-[24px]">
          <Check />
        </Row>
        <Row label="Redraw Time" h="h-[24px]">
          <Num v="0.0" />
        </Row>
        <Row label="Draw at Desired Size" h="h-[24px]">
          <Check />
        </Row>
        <Row label="Pivot" h="h-[26px]" arrow>
          <Num axis="X" v="0.5" w="w-[115px]" />
          <span className="w-[4px]" />
          <Num axis="Y" v="0.5" w="w-[114px]" />
        </Row>
        <Row label="X" h="h-[24px]" indent>
          <Num v="0.5" />
        </Row>
        <Row label="Y" h="h-[24px]" indent>
          <Num v="0.5" />
        </Row>
        <Row label="Geometry Mode" h="h-[26px]">
          <Combo text="Plane" w="w-[103px]" spread />
        </Row>
        <Row label="Cylinder Arc Angle" h="h-[24px]">
          <Num v="180.0" off />
        </Row>
        <div className="mt-px flex h-[15px] shrink-0 items-center justify-center bg-[#464646] pr-[16px]">
          <svg width="10" height="7" viewBox="0 0 10 7">
            <path d="M0 0h10v1.200H0zM0 2.200h10L5 7z" fill="#dcdcdc" />
          </svg>
        </div>
        <Section title="Interaction" />
        <Row label="Receive Hardware Input" h="h-[24px]">
          <Check />
        </Row>
        <Row label="Window Focusable" h="h-[24px]">
          <Check on />
        </Row>
        <Row label="Window Visibility" h="h-[37px]" pb="pb-[10px]">
          <Combo text="Self Hit Test Invisible" w="w-[131px] !tracking-[0.300px]" />
        </Row>
        <Section title="Animation" cls="mt-[2px]" />
        <Row label="Tick when Offscreen" h="h-[35px]" pb="pb-[11px]">
          <Check />
        </Row>
        <Section title="Layers" cls="mt-[2px]" />
        <Row label="Shared Layer Name" h="h-[24px]">
          <div className="flex h-[17px] w-[164px] items-center rounded-[2px] bg-[#d9d9d9] pl-[5px] text-[11px] tracking-[0.100px] text-[#111]">
            WidgetComponentScreenLayer
          </div>
        </Row>
        <Row label="Layer ZOrder" h="h-[35px]" pb="pb-[11px]">
          <Num v="-100" />
        </Row>
        <Section title="Physics" cls="mt-[2px]" />
        <Row label="Simulate Physics" h="h-[24px]">
          <Check />
        </Row>
        <div className="flex h-[24px] shrink-0 items-center">
          <span className="flex h-full w-[199px] items-center border-r border-[#262626] pl-[17px]">
            <Check />
            <span className="ml-[3px] text-[11px] tracking-[0.150px] text-[#707070]">MassInKg</span>
          </span>
          <span className="pl-[5px]">
            <Num v="0.0" w="w-[98px]" off spin={false} />
          </span>
        </div>
      </div>
    </div>
    {/* scroll track and thumb */}
    <div className="absolute bottom-[4px] right-[9px] top-[51px] w-px bg-[#5d5d5d]" />
    <div className="absolute right-[4px] top-[131px] h-[310px] w-[10px] bg-white" />
  </div>
);

/* ---------- task bar ---------- */

const TaskApp = ({ children, cls = "w-[49px]", line = "bg-[#0078d7]" }: { children: ReactNode; cls?: string; line?: string }) => (
  <div className={`flex shrink-0 flex-col items-center ${cls}`}>
    <div className="flex h-[38px] items-center pt-[2px]">{children}</div>
    <div className={`h-[2px] w-[40px] ${line}`} />
  </div>
);

const Taskbar = () => (
  <div className="flex h-[40px] shrink-0 bg-[linear-gradient(90deg,#cfe6ef_0,#cfe6ef_560px,#e6e9ea_660px,#ececec_900px,#ededed_1600px,#d3dcec_1760px,#cfd9ea_1920px)]">
    <div className="flex w-[48px] items-center justify-center">
      <svg width="16" height="16" viewBox="0 0 16 16">
        <path d="M0 2.300l6.500-.9v6.100H0zM7.300 1.300L16 0v7.500H7.300zM0 8.300h6.500v6.200L0 13.600zM7.300 8.300H16V16l-8.700-1.200z" fill="#000" />
      </svg>
    </div>
    <div className="flex w-[344px] items-center border border-[#c4c4c4] bg-white pl-[12px]">
      <svg width="16" height="17" viewBox="0 0 16 17" fill="none" stroke="#111" strokeWidth="1.300">
        <circle cx="10" cy="6" r="5" />
        <path d="M6.500 9.800L0.800 16" />
      </svg>
      <span className="ml-[11px] font-['Noto_Sans_CJK_SC'] text-[14px] text-[#1c1c1c]">在这里输入你要搜索的内容</span>
    </div>
    <div className="flex w-[49px] items-center justify-center">
      <svg width="16" height="16" viewBox="0 0 16 16">
        <circle cx="8" cy="8" r="6.700" fill="none" stroke="#000" strokeWidth="2" />
      </svg>
    </div>
    <div className="flex w-[45px] items-center justify-center">
      <svg width="17" height="16" viewBox="0 0 17 16" fill="none" stroke="#000" strokeWidth="1.300">
        <path d="M1 0.500v2.500h10V0.500M1 15.500V13h10v2.500M1 5.500h10v5H1zM15 0v16" />
        <path d="M13.500 4h3v3h-3z" fill="#000" stroke="none" />
      </svg>
    </div>
    <div className="w-[4px]" />
    <TaskApp>
      <svg width="23" height="23" viewBox="0 0 24 24">
        <circle cx="12" cy="12" r="11.500" fill="#fbc116" />
        <path d="M12 12L2 6.200A11.500 11.500 0 0 1 22 6.300H12z" fill="#db4437" />
        <path d="M2.100 6.100A11.500 11.500 0 0 0 11 23.500L16.500 14.500 12 17 7.300 14.700z" fill="#1da05a" />
        <circle cx="12" cy="12" r="5.600" fill="#f3f3f3" />
        <circle cx="12" cy="12" r="4.500" fill="#4688f2" />
      </svg>
    </TaskApp>
    <TaskApp>
      <svg width="24" height="20" viewBox="0 0 24 20">
        <ellipse cx="9" cy="7.500" rx="8.800" ry="7.300" fill="#6fcf2a" />
        <path d="M3 12l-.5 4 4-2z" fill="#6fcf2a" />
        <circle cx="6" cy="5.500" r="1.200" fill="#1d3d0a" />
        <circle cx="12" cy="5.500" r="1.200" fill="#1d3d0a" />
        <ellipse cx="16.800" cy="13" rx="7" ry="5.800" fill="#f1f1f1" stroke="#cfd5d5" strokeWidth="0.600" />
        <circle cx="14.500" cy="11.500" r="0.900" fill="#555" />
        <circle cx="19" cy="11.500" r="0.900" fill="#555" />
      </svg>
    </TaskApp>
    <TaskApp line="bg-[linear-gradient(90deg,#0078d7_32px,#62a9e3_32px)]">
      <svg width="22" height="19" viewBox="0 0 22 19">
        <path d="M0.500 0.500h9l1.500 2H21.500v15h-21z" fill="#f6cd5b" />
        <path d="M0.500 0.500h9L10.500 3H0.500z" fill="#dc9c11" />
        <path d="M4 19V10h14v9h-4v-4.500H8V19z" fill="#3f93d9" />
      </svg>
    </TaskApp>
    <TaskApp>
      <div className="flex h-[19px] w-[20px] items-center justify-center rounded-[2px] border border-[#dcdcdc] bg-[#f8f8f8] font-['Liberation_Serif'] text-[13px] text-[#333]">
        T
      </div>
    </TaskApp>
    <TaskApp cls="w-[48px] ml-[1px] bg-[#f9f9f9]" line="w-[48px] bg-[#0078d7]">
      <svg width="22" height="22" viewBox="0 0 22 22">
        <circle cx="11" cy="11" r="10.800" fill="#1f1f1f" />
        <path
          d="M4 10.500c1-2.500 3-4 5-4.800-.5 1-.5 1.500-.5 2.500v5c0 .8 1.200 1 1.700 0V8.200c0-.5-.3-.7-.7-.8 1-1 2.500-1.500 3.500-2v8c0 .8 1 .8 1.700.2l2-1.800c-.8 2.300-2.300 3.600-4 4.500l-1.200-1.200-2 1.500c-2-.2-3.300-1.200-3.800-2.300.8.200 1.200-.2 1.200-1V10c0-.8-1-.8-2.900.5z"
          fill="#fff"
        />
      </svg>
    </TaskApp>
    <TaskApp cls="w-[48px] ml-[1px]">
      <svg width="23" height="22" viewBox="0 0 23 22" fill="none">
        <rect x="1" y="1" width="20" height="15" fill="#fafafa" stroke="#a3a3a3" strokeWidth="1.400" />
        <path d="M3.500 4h11M3.500 7h6M3.500 10h9" stroke="#9a9a9a" />
        <path d="M11 16v4M5.500 20.500h11" stroke="#a3a3a3" strokeWidth="1.800" />
      </svg>
    </TaskApp>
    <TaskApp>
      <svg width="21" height="21" viewBox="0 0 21 21">
        <circle cx="10.500" cy="10.500" r="10.300" fill="#262329" />
        <path d="M10 10.500C6 9 5.500 5 8 3M10.500 10c3-3.500 7-1 7 2.500M10.500 11c.5 4-3 6-6.500 4" fill="none" stroke="#a5a2aa" strokeWidth="1.300" />
      </svg>
    </TaskApp>
    <div className="ml-[5px] flex w-[40px] flex-col items-center bg-[linear-gradient(90deg,#ded98a_31px,#cdcdcd_31px)]">
      <div className="flex h-[38px] items-center pt-[2px]">
        <svg width="24" height="25" viewBox="0 0 24 25">
          <rect x="0" y="1" width="23" height="23" rx="1.500" fill="#f7d712" />
          <circle cx="11.500" cy="9" r="5" fill="none" stroke="#fff" strokeWidth="2.200" />
          <path d="M10 6.500l4 2.500-4 2.500z" fill="#fff" />
          <text x="3" y="22" fontFamily="Roboto" fontWeight="700" fontSize="7" fill="#222">
            Play
          </text>
          <path d="M12.500 11.500h4v12h-4zM19 11.500h4v12h-4z" fill="#e8c90c" stroke="#222" />
        </svg>
      </div>
      <div className="h-[2px] w-[40px] bg-[#fdf000]" />
    </div>
    <div className="grow" />
    <div className="flex w-[210px] shrink-0 items-center font-['Noto_Sans_CJK_SC'] text-[12px] text-black">
      <svg width="12" height="8" viewBox="0 0 12 8" fill="none" stroke="#111" strokeWidth="1.300" className="shrink-0">
        <path d="M0.800 7L6 1.500 11.200 7" />
      </svg>
      <svg width="17" height="15" viewBox="0 0 17 15" fill="none" stroke="#111" strokeWidth="1.200" className="ml-[10px] shrink-0">
        <path d="M5 3.500h11v7.500H5M10 11v3M6.500 14h8M1 1h4v3.500H1zM3 4.500V14" />
      </svg>
      <svg width="17" height="14" viewBox="0 0 17 14" fill="none" stroke="#111" strokeWidth="1.200" className="ml-[7px] shrink-0">
        <path d="M1 4.800h2.500L7 1.500v11L3.500 9.200H1zM9 5c1 1.200 1 3 0 4M11.300 3c2 2.400 2 5.600 0 8M13.700 1.200c3 3.500 3 8.100 0 11.600" />
      </svg>
      <span className="ml-[6px] text-[16px]">英</span>
      <span className="ml-[9px] flex w-[62px] shrink-0 flex-col items-center font-['Open_Sans'] text-[12px] leading-[19px]">
        <span className="tracking-[-0.300px]">14:12</span>
        <span className="whitespace-nowrap">2020/5/19</span>
      </span>
      <span className="relative ml-[16px] shrink-0">
        <svg width="26" height="28" viewBox="0 0 26 28">
          <path d="M1 2h16v12H8l-3.500 3.500V14H1z" fill="#0a0a0a" />
          <path d="M4 5.500h10M4 8h10M4 10.500h7" stroke="#cfd9ea" strokeWidth="1" />
          <circle cx="16.500" cy="17.500" r="8" fill="#dbe0e8" stroke="#8a8f98" />
          <text x="16.500" y="22" fontFamily="Open Sans" fontSize="12" textAnchor="middle" fill="#111">
            4
          </text>
        </svg>
      </span>
    </div>
    <div className="h-full w-px bg-[#a9b3c2]" />
    <div className="w-[4px]" />
  </div>
);

/* ---------- page ---------- */

export default function App() {
  return (
    <div className="relative flex h-[1080px] w-[1920px] flex-col overflow-hidden bg-[#222] font-['Roboto',sans-serif] leading-[14px]">
      <TabStrip />
      <MenuBar />
      <div className="flex h-[993px] shrink-0 pb-px">
        <div className="ml-px mr-[5px] flex w-[252px] shrink-0 flex-col">
          <ComponentsPanel />
          <BlueprintPanel />
        </div>
        <CenterColumn />
        <Details />
      </div>
      <Taskbar />

      {/* tutorial beacon glowing over the title bar */}
      <svg width="62" height="46" viewBox="0 0 62 46" className="absolute left-[1777px] top-0">
        <defs>
          <radialGradient id="halo">
            <stop offset="0.600" stopColor="#13a022" stopOpacity="0.550" />
            <stop offset="1" stopColor="#0f7a1a" stopOpacity="0.300" />
          </radialGradient>
          <radialGradient id="core">
            <stop offset="0.250" stopColor="#234a29" />
            <stop offset="1" stopColor="#0c8a1b" />
          </radialGradient>
        </defs>
        <circle cx="31" cy="14" r="30" fill="url(#halo)" />
        <circle cx="31" cy="14" r="20" fill="url(#core)" stroke="#14c92a" strokeWidth="1.400" />
        <path d="M26 13l6 3.500 5-3.500v5.500l-5 3-6-3z" fill="#4d7fc4" />
        <path d="M23 10.500L32 6l7.500 5-7.500 5z" fill="#bcd9f5" />
        <path d="M24 12v8" stroke="#d39a3a" strokeWidth="1.700" />
      </svg>

      {/* highlight around the draw size rows */}
      <div className="absolute left-[1327px] top-[407px] h-[77px] w-[469px] rounded-[3px] border-[3px] border-[#fb2214]" />

      <div className="absolute left-[1630px] top-[943px] font-['Open_Sans','Noto_Sans_CJK_SC',sans-serif] text-[#8d8d8d]">
        <div className="text-[20.800px] leading-[27px]">激活 Windows</div>
        <div className="text-[14.900px] leading-[22px]">转到“设置”以激活 Windows。</div>
      </div>
    </div>
  );
}
